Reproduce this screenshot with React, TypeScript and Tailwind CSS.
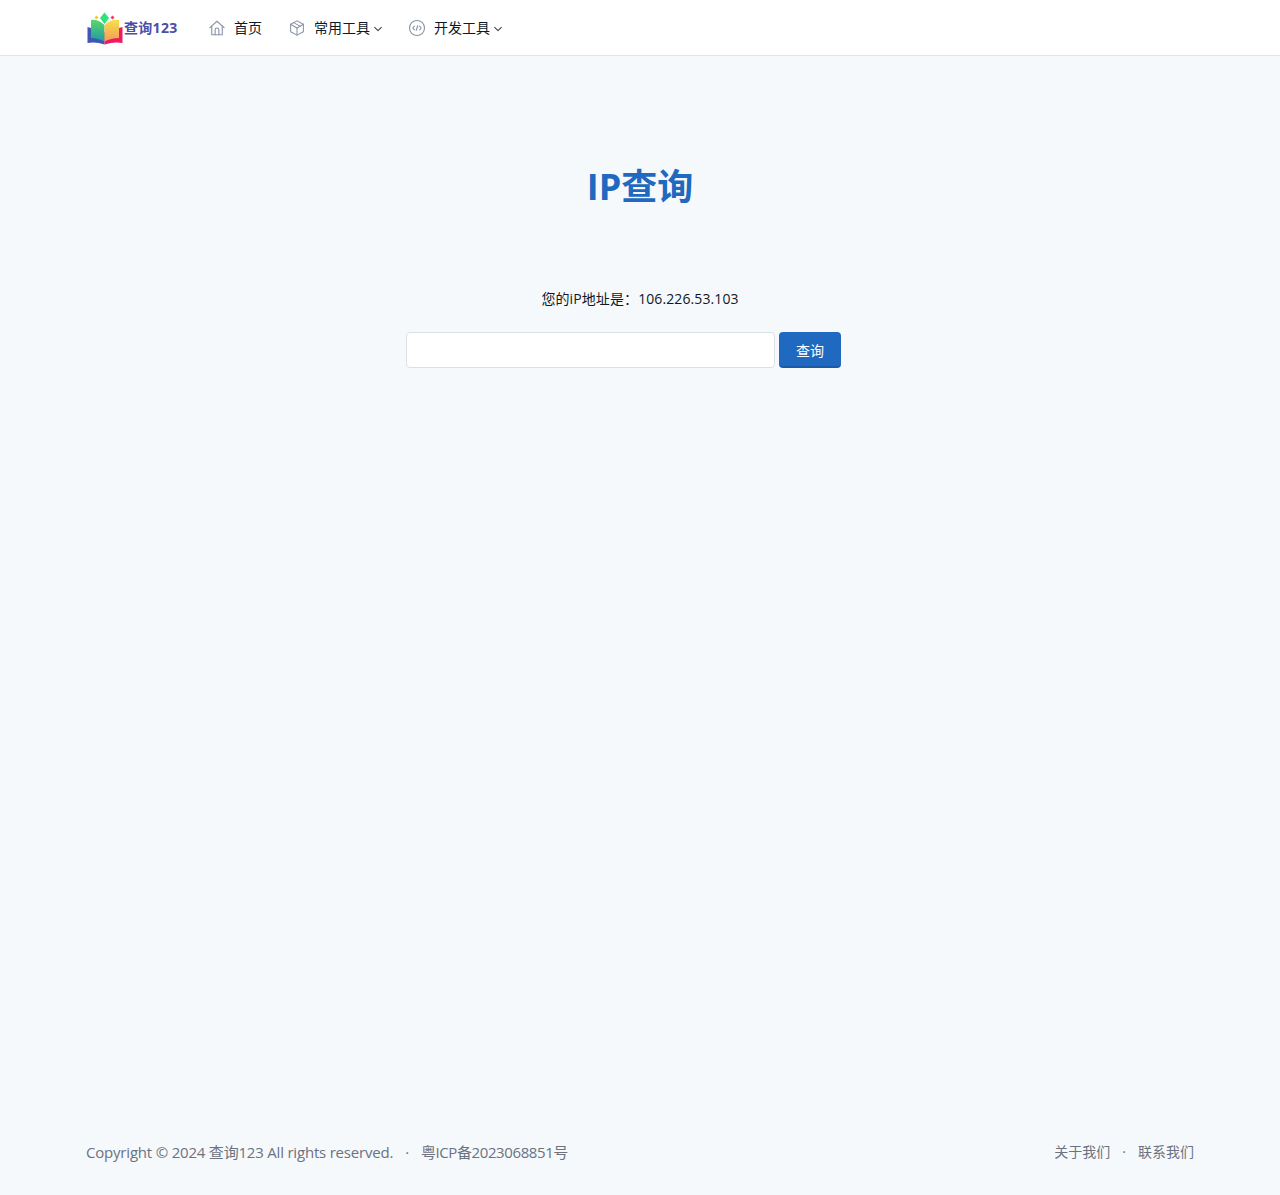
import React from "react";

const Chevron = () => (
  <svg width="10" height="10" viewBox="0 0 24 24" fill="none" stroke="#374151" strokeWidth="2.500" strokeLinecap="round" strokeLinejoin="round" className="ml-[3px] mt-[1px]">
    <path d="M4 8l8 8 8-8" />
  </svg>
);

const Logo = () => (
  <svg width="36" height="33" viewBox="0 0 36 33" className="block">
    <defs>
      <linearGradient id="lf" x1="0" y1="0" x2="0" y2="1">
        <stop offset="0" stopColor="#5ad86a" />
        <stop offset="1" stopColor="#1f9aa5" />
      </linearGradient>
      <linearGradient id="rf" x1="0" y1="0" x2="0" y2="1">
        <stop offset="0" stopColor="#f7e04a" />
        <stop offset="1" stopColor="#f49a5b" />
      </linearGradient>
    </defs>
    <path d="M0.500 15 L0.500 31 Q9 29.500 17.500 32.500 L17.500 20 Z" fill="#3f55b8" />
    <path d="M35.500 15 L35.500 31 Q27 29.500 17.500 32.500 L17.500 20 Z" fill="#ec1b63" />
    <path d="M4 8 Q11 7 17.500 13 L17.500 29.500 Q11 26 4 26 Z" fill="url(#lf)" />
    <path d="M32 8 Q24 7 17.500 13 L17.500 29.500 Q24 26 32 26 Z" fill="url(#rf)" />
    <path d="M17.500 0.500 L22 6 L17.500 12 L13 6 Z" fill="#2fe27a" />
    <path d="M9.500 3.500 L11.500 5.500 L9.500 7.500 L7.500 5.500 Z" fill="#f5c242" />
    <path d="M25.500 3.500 L27.500 5.500 L25.500 7.500 L23.500 5.500 Z" fill="#ef3b5d" />
  </svg>
);

export default function App() {
  return (
    <div className="min-h-[1195px] flex flex-col bg-[#f6f9fc] font-['Open_Sans','Noto_Sans_CJK_SC',sans-serif]">
      <header className="h-[56px] bg-white border-b border-[#e2e4ea]">
        <div className="mx-[86px] h-full flex items-center">
          <div className="flex items-center w-[122px]">
            <div className="ml-[1px] mt-[1px]"><Logo /></div>
            <span className="ml-[1px] text-[14px] leading-none font-bold text-[#4a4fa8] tracking-[0.3px]">查询123</span>
          </div>
          <nav className="flex items-center text-[14px] text-[#111827] mt-[1px]">
            <a className="flex items-center w-[80px]">
              <svg width="18" height="18" viewBox="0 0 24 24" fill="none" stroke="#8a94a6" strokeWidth="1.500" strokeLinecap="round" strokeLinejoin="round">
                <path d="M2.500 11.500 12 3l9.500 8.500" />
                <path d="M5 9.500V21h14V9.500" />
                <path d="M9.500 21v-6.500a2.500 2.500 0 0 1 5 0V21" />
              </svg>
              <span className="ml-[8px] mb-[2px]">首页</span>
            </a>
            <a className="flex items-center w-[120px]">
              <svg width="18" height="18" viewBox="0 0 24 24" fill="none" stroke="#8a94a6" strokeWidth="1.400" strokeLinecap="round" strokeLinejoin="round">
                <path d="M12 2.500 20.500 7v10L12 21.500 3.500 17V7z" />
                <path d="M3.500 7 12 12l8.500-5" />
                <path d="M12 12v9.500" />
                <path d="M7.500 4.800 16 9.500" />
              </svg>
              <span className="ml-[8px] mb-[2px]">常用工具</span>
              <Chevron />
            </a>
            <a className="flex items-center">
              <svg width="18" height="18" viewBox="0 0 24 24" fill="none" stroke="#8a94a6" strokeWidth="1.500" strokeLinecap="round" strokeLinejoin="round">
                <circle cx="12" cy="12" r="10" />
                <path d="M8.500 9.500 6.500 12l2 2.500" />
                <path d="M15.500 9.500l2 2.500-2 2.500" />
                <path d="M13 9l-2 6" />
              </svg>
              <span className="ml-[8px] mb-[2px]">开发工具</span>
              <Chevron />
            </a>
          </nav>
        </div>
      </header>

      <main className="flex-1 flex flex-col items-center">
        <h1 className="mt-[106px] text-[36px] leading-[50px] font-bold text-[#1f69c1]">IP查询</h1>
        <p className="mt-[77px] text-[14px] leading-[20px] tracking-[0.1px] text-[#111827]">您的iP地址是：106.226.53.103</p>
        <form className="mt-[23px] flex mr-[33px] gap-[4px]">
          <input className="w-[369px] h-[36px] bg-white border border-[#dcdfe6] rounded-[4px]" />
          <button type="button" className="w-[62px] h-[36px] pt-[2px] bg-[#1f69c1] border-b-2 border-[#1a5aa8] rounded-[4px] text-white text-[14px]">查询</button>
        </form>
      </main>

      <footer className="mx-[86px] h-[58px] pt-[5px] flex justify-between text-[15px] leading-[20px] text-[#6b7280]">
        <div className="flex items-start tracking-[-0.2px]">
          <span>Copyright © 2024 查询123 All rights reserved.</span>
          <span className="mx-[12px]">·</span>
          <span className="tracking-[-0.4px]">粤ICP备2023068851号</span>
        </div>
        <div className="flex items-start text-[14px] tracking-normal">
          <span>关于我们</span>
          <span className="mx-[12px]">·</span>
          <span>联系我们</span>
        </div>
      </footer>
    </div>
  );
}
